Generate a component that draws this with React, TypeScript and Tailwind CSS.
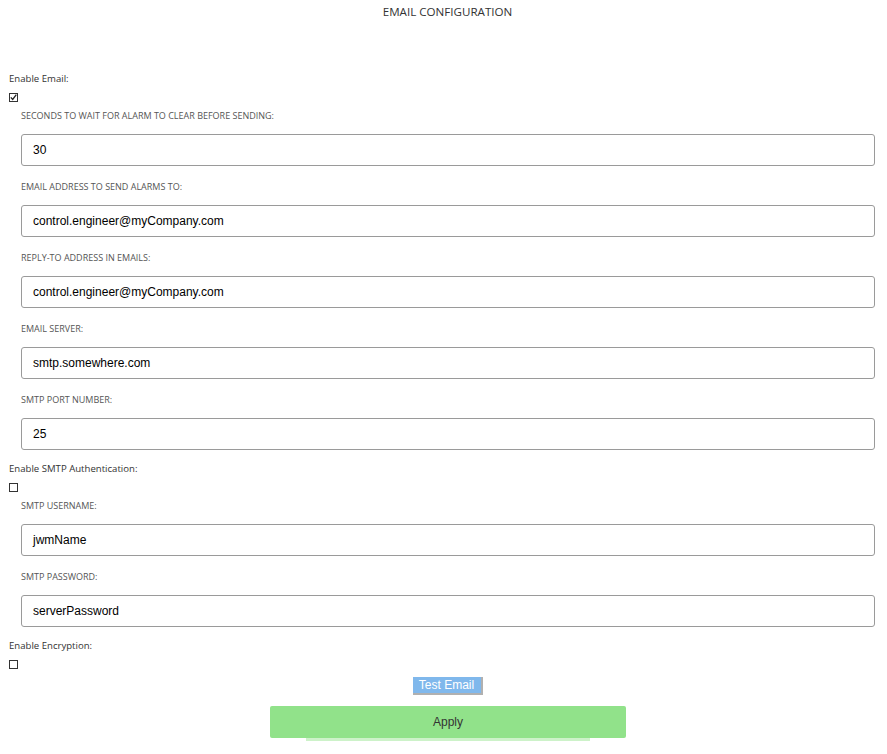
function Box({ checked }: { checked?: boolean }) {
    return (
        <div className="h-[18px] flex items-center pl-[9px]">
            <span className="w-[9px] h-[9px] border border-[#333] bg-white flex items-center justify-center">
                {checked && (
                    <svg width="7" height="7" viewBox="0 0 7 7">
                        <path d="M0.8 3.4 L2.7 5.5 L6.3 0.6" fill="none" stroke="#222" strokeWidth="1.3" />
                    </svg>
                )}
            </span>
        </div>
    )
}

function Toggle({ label, checked, top }: { label: string; checked?: boolean; top: string }) {
    return (
        <div className={top}>
            <div className="h-[18px] leading-[18px] pl-[9px] text-[9.6px] text-[#333] font-['Open_Sans',sans-serif]">{label}</div>
            <Box checked={checked} />
        </div>
    )
}

function Field({ label, value, top }: { label: string; value: string; top: string }) {
    return (
        <div className={top + ' pl-[21px] pr-[12px]'}>
            <div className="h-[18px] leading-[18px] text-[9px] text-[#555] font-['Open_Sans',sans-serif] uppercase">{label}</div>
            <div className="mt-[9px] h-[32px] border border-[#9a9a9a] rounded-[3px] flex items-center pl-[11px] text-[12px] text-black font-['Liberation_Sans',Arial,sans-serif]">
                {value}
            </div>
        </div>
    )
}

export default function App() {
    return (
        <div className="w-[887px] h-[754px] bg-white overflow-hidden">
            <div className="h-[24px] leading-[24px] text-center text-[11.6px] text-[#333] font-['Open_Sans',sans-serif] pl-[8px]">EMAIL CONFIGURATION</div>
            <Toggle label="Enable Email:" checked top="mt-[46px]" />
            <Field label="Seconds to wait for alarm to clear before sending:" value="30" top="mt-[1px]" />
            <Field label="Email address to send alarms to:" value="control.engineer@myCompany.com" top="mt-[12px]" />
            <Field label="Reply-to address in emails:" value="control.engineer@myCompany.com" top="mt-[12px]" />
            <Field label="Email server:" value="smtp.somewhere.com" top="mt-[12px]" />
            <Field label="SMTP port number:" value="25" top="mt-[12px]" />
            <Toggle label="Enable SMTP Authentication:" top="mt-[10px]" />
            <Field label="SMTP username:" value="jwmName" top="mt-[1px]" />
            <Field label="SMTP password:" value="serverPassword" top="mt-[12px]" />
            <Toggle label="Enable Encryption:" top="mt-[10px]" />
            <div className="mt-[4px] flex justify-center">
                <button className="w-[70px] h-[18px] bg-[#80b8ec] border-r-2 border-b-2 border-[#b0b0b0] text-white text-[12px] leading-[16px] font-['Liberation_Sans',Arial,sans-serif] ml-[8px]">
                    Test Email
                </button>
            </div>
            <div className="mt-[11px] flex flex-col items-center pl-[9px]">
                <button className="w-[356px] h-[32px] bg-[#91e28a] rounded-[2px] text-[12px] text-[#333] font-['Liberation_Sans',Arial,sans-serif]">
                    Apply
                </button>
                <div className="w-[284px] h-[3px] bg-[#cdf2c9]"></div>
            </div>
        </div>
    )
}
